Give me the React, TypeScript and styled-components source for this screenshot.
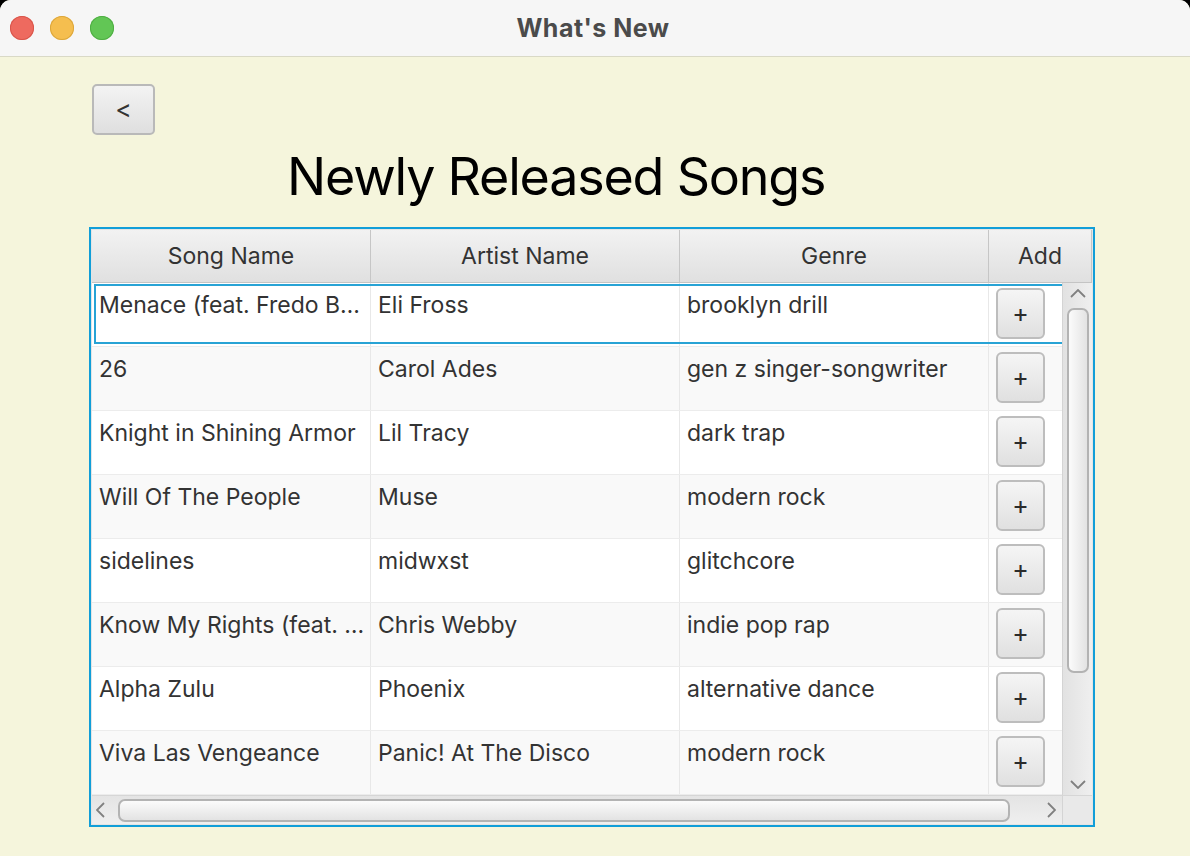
import React from "react";
import styled, { createGlobalStyle } from "styled-components";

const GlobalStyle = createGlobalStyle`
  html, body {
    margin: 0;
    padding: 0;
    background: #000;
  }
  * { box-sizing: border-box; }
`;

const FONT = `"Inter", "Noto Sans", "Liberation Sans", sans-serif`;

const Window = styled.div`
  width: 1190px;
  height: 856px;
  background: #f5f5dc;
  border-radius: 11px 11px 0 0;
  overflow: hidden;
  display: flex;
  flex-direction: column;
  font-family: ${FONT};
`;

const TitleBar = styled.div`
  height: 57px;
  flex: none;
  background: #f6f6f6;
  border-bottom: 1px solid #d9d9c6;
  display: grid;
  grid-template-columns: 1fr auto 1fr;
  align-items: center;
`;

const Lights = styled.div`
  display: flex;
  gap: 16px;
  padding-left: 10px;
`;

const Light = styled.span<{ $c: string; $b: string }>`
  width: 24px;
  height: 24px;
  border-radius: 50%;
  background: ${(p) => p.$c};
  box-shadow: inset 0 0 0 1px ${(p) => p.$b};
`;

const Title = styled.div`
  font-weight: 700;
  font-size: 25px;
  color: #4b4b4b;
  letter-spacing: 0.5px;
  margin-left: -4px;
`;

const Content = styled.div`
  flex: 1;
  display: flex;
  flex-direction: column;
  align-items: flex-start;
  padding: 27px 0 0 89px;
`;

const BackButton = styled.button`
  margin-left: 3px;
  width: 63px;
  height: 51px;
  border: 2px solid #b9b9b9;
  border-radius: 5px;
  background: linear-gradient(#f3f3f3, #dfdfdf);
  font-family: ${FONT};
  font-size: 25px;
  color: #333;
  padding: 0 0 2px 0;
`;

const Heading = styled.h1`
  margin: 10px 0 0 198px;
  font-weight: 400;
  font-size: 52px;
  line-height: 64px;
  letter-spacing: -1.2px;
  color: #000;
`;

const Table = styled.div`
  margin-top: 18px;
  width: 1006px;
  height: 600px;
  border: 2px solid #119ed8;
  padding: 1px;
  background: #e4e4e4;
  display: flex;
  flex-direction: column;
`;

const HeaderRow = styled.div`
  height: 53px;
  flex: none;
  display: flex;
  border-bottom: 1px solid #c4c4c4;
`;

const HeaderCell = styled.div<{ $w: number }>`
  width: ${(p) => p.$w}px;
  flex: ${(p) => (p.$w ? "none" : "1")};
  background: linear-gradient(#f2f2f2, #e0e0e0);
  border-right: 1px solid #c6c6c6;
  display: flex;
  align-items: center;
  justify-content: center;
  font-size: 23px;
  color: #333;
  padding-bottom: 1px;
`;

const BodyArea = styled.div`
  display: flex;
  height: 512px;
  flex: none;
`;

const Viewport = styled.div`
  width: 970px;
  overflow: hidden;
  background: #fff;
`;

const Row = styled.div<{ $odd: boolean; $sel?: boolean }>`
  position: relative;
  width: 998px;
  height: 64px;
  display: flex;
  background: ${(p) => (p.$odd ? "#f9f9f9" : "#ffffff")};
  border-bottom: 1px solid #ececec;
  &::after {
    content: "";
    display: ${(p) => (p.$sel ? "block" : "none")};
    position: absolute;
    top: 1px;
    left: 2px;
    right: 1px;
    bottom: 2px;
    border: 2px solid #28a3d5;
    pointer-events: none;
  }
`;

const Cell = styled.div<{ $w: number }>`
  width: ${(p) => p.$w}px;
  flex: none;
  border-right: 1px solid #e8e8e8;
  padding: 8px 7px 0 7px;
  font-size: 23px;
  line-height: 28px;
  color: #333;
  white-space: nowrap;
  overflow: hidden;
`;

const AddCell = styled.div`
  flex: 1;
  padding: 5px 0 0 7px;
`;

const PlusButton = styled.button`
  width: 49px;
  height: 51px;
  border: 2px solid #bdbdbd;
  border-radius: 6px;
  background: linear-gradient(#f5f5f5, #e0e0e0);
  font-family: ${FONT};
  font-size: 25px;
  color: #2b2b2b;
  padding: 0 0 2px 0;
  display: flex;
  align-items: center;
  justify-content: center;
`;

const VScroll = styled.div`
  width: 30px;
  flex: none;
  background: linear-gradient(90deg, #e2e2e2, #efefef);
  border-left: 1px solid #d4d4d4;
  display: flex;
  flex-direction: column;
  align-items: center;
  padding: 6px 0 6px 0;
`;

const VThumb = styled.div`
  width: 22px;
  height: 365px;
  margin: 10px 0 0 1px;
  border: 2px solid #b3b3b3;
  border-radius: 7px;
  background: linear-gradient(90deg, #fbfbfb, #e3e3e3);
`;

const Spacer = styled.div`
  flex: 1;
`;

const BottomArea = styled.div`
  flex: 1;
  display: flex;
  border-top: 1px solid #d6d6d6;
`;

const HScroll = styled.div`
  width: 970px;
  background: linear-gradient(#e4e4e4, #efefef);
  display: flex;
  align-items: center;
  padding: 0 6px 0 4px;
`;

const HThumb = styled.div`
  width: 892px;
  height: 23px;
  margin-left: 13px;
  border: 2px solid #b3b3b3;
  border-radius: 7px;
  background: linear-gradient(#fbfbfb, #e3e3e3);
`;

const Corner = styled.div`
  flex: 1;
  background: #e9e9e9;
  border-left: 1px solid #d4d4d4;
`;

const Chevron = ({ dir }: { dir: "up" | "down" | "left" | "right" }) => {
  const paths: Record<string, string> = {
    up: "M1 8 L8 1 L15 8",
    down: "M1 1 L8 8 L15 1",
    left: "M8 1 L1 8 L8 15",
    right: "M1 1 L8 8 L1 15",
  };
  const vertical = dir === "up" || dir === "down";
  return (
    <svg
      width={vertical ? 16 : 9}
      height={vertical ? 9 : 16}
      viewBox={vertical ? "0 0 16 9" : "0 0 9 16"}
      fill="none"
    >
      <path d={paths[dir]} stroke="#808080" strokeWidth="1.8" />
    </svg>
  );
};

const songs = [
  ["Menace (feat. Fredo B…", "Eli Fross", "brooklyn drill"],
  ["26", "Carol Ades", "gen z singer-songwriter"],
  ["Knight in Shining Armor", "Lil Tracy", "dark trap"],
  ["Will Of The People", "Muse", "modern rock"],
  ["sidelines", "midwxst", "glitchcore"],
  ["Know My Rights (feat. …", "Chris Webby", "indie pop rap"],
  ["Alpha Zulu", "Phoenix", "alternative dance"],
  ["Viva Las Vengeance", "Panic! At The Disco", "modern rock"],
];

export default function App() {
  return (
    <>
      <GlobalStyle />
      <Window>
        <TitleBar>
          <Lights>
            <Light $c="#ee6a5f" $b="#d8564b" />
            <Light $c="#f5be4f" $b="#dca73c" />
            <Light $c="#62c655" $b="#4fae43" />
          </Lights>
          <Title>What's New</Title>
          <div />
        </TitleBar>
        <Content>
          <BackButton>&lt;</BackButton>
          <Heading>Newly Released Songs</Heading>
          <Table>
            <HeaderRow>
              <HeaderCell $w={279}>Song Name</HeaderCell>
              <HeaderCell $w={309}>Artist Name</HeaderCell>
              <HeaderCell $w={309}>Genre</HeaderCell>
              <HeaderCell $w={0}>Add</HeaderCell>
            </HeaderRow>
            <BodyArea>
              <Viewport>
                {songs.map((s, i) => (
                  <Row key={i} $odd={i % 2 === 1} $sel={i === 0}>
                    <Cell $w={279}>{s[0]}</Cell>
                    <Cell $w={309}>{s[1]}</Cell>
                    <Cell $w={309}>{s[2]}</Cell>
                    <AddCell>
                      <PlusButton>+</PlusButton>
                    </AddCell>
                  </Row>
                ))}
              </Viewport>
              <VScroll>
                <Chevron dir="up" />
                <VThumb />
                <Spacer />
                <Chevron dir="down" />
              </VScroll>
            </BodyArea>
            <BottomArea>
              <HScroll>
                <Chevron dir="left" />
                <HThumb />
                <Spacer />
                <Chevron dir="right" />
              </HScroll>
              <Corner />
            </BottomArea>
          </Table>
        </Content>
      </Window>
    </>
  );
}
